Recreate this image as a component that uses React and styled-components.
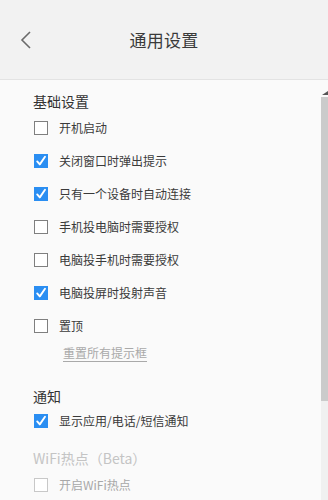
import React from "react";
import styled, { createGlobalStyle } from "styled-components";

const Global = createGlobalStyle`
  html, body { margin: 0; padding: 0; }
  body {
    background: #fafafa;
    font-family: "Noto Sans CJK SC", "Noto Sans", sans-serif;
    color: #333;
  }
`;

const Page = styled.div`
  width: 328px;
  height: 500px;
  display: flex;
  flex-direction: column;
  overflow: hidden;
  background: #fafafa;
`;

const Header = styled.header`
  height: 79px;
  flex: 0 0 auto;
  display: grid;
  grid-template-columns: 60px 1fr 60px;
  align-items: center;
  background: #f2f2f2;
  border-bottom: 1px solid #e3e3e3;
`;

const Back = styled.button`
  border: none;
  background: none;
  padding: 0 0 0 20px;
  display: flex;
  align-items: center;
  cursor: pointer;
`;

const Title = styled.h1`
  margin: 0;
  text-align: center;
  font-size: 17px;
  font-weight: 400;
  color: #3a3a3a;
  letter-spacing: 0.2px;
`;

const Body = styled.div`
  flex: 1;
  display: flex;
  min-height: 0;
`;

const Content = styled.div`
  flex: 1;
  padding: 11px 0 0 33px;
`;

const SectionTitle = styled.div`
  font-size: 14px;
  line-height: 20px;
  color: ${(p) => (p.$disabled ? "#c4c4c4" : "#333")};
  margin-top: ${(p) => p.$mt || 0}px;
  margin-bottom: ${(p) => p.$mb || 0}px;
`;

const Row = styled.label`
  display: flex;
  align-items: center;
  height: 33px;
  gap: 11px;
  padding-left: 1px;
  cursor: pointer;
`;

const Box = styled.span`
  width: 14px;
  height: 14px;
  box-sizing: border-box;
  flex: 0 0 auto;
  display: flex;
  align-items: center;
  justify-content: center;
  background: ${(p) => (p.$checked ? "#2a8ef2" : "#fff")};
  border: 1px solid ${(p) => (p.$checked ? "#2a8ef2" : p.$disabled ? "#c8c8c8" : "#7f7f7f")};
`;

const Label = styled.span`
  font-size: 12px;
  line-height: 16px;
  color: ${(p) => (p.$disabled ? "#a8a8a8" : "#3a3a3a")};
`;

const Link = styled.a`
  display: block;
  margin-left: 30px;
  font-size: 12px;
  line-height: 22px;
  color: #a9a9a9;
  text-decoration: underline;
  text-underline-offset: 3px;
`;

const ScrollBar = styled.div`
  width: 7px;
  flex: 0 0 auto;
  display: flex;
  flex-direction: column;
  background: #f0f0f0;
`;

const Arrow = styled.div`
  height: 17px;
  display: flex;
  align-items: flex-end;
  justify-content: center;
  padding-bottom: 2px;
  box-sizing: border-box;
  background: #fafafa;
`;

const Thumb = styled.div`
  height: 304px;
  background: #cbcbcb;
`;

function Check({ checked, disabled }) {
  return (
    <Box $checked={checked} $disabled={disabled}>
      {checked && (
        <svg width="12" height="12" viewBox="0 0 12 12">
          <path d="M2.2 6.4 L4.8 9.4 L10 1.8" fill="none" stroke="#fff" strokeWidth="1.9" strokeLinecap="round" strokeLinejoin="round" />
        </svg>
      )}
    </Box>
  );
}

function Item({ text, checked, disabled }) {
  return (
    <Row>
      <Check checked={checked} disabled={disabled} />
      <Label $disabled={disabled}>{text}</Label>
    </Row>
  );
}

export default function App() {
  const basic = [
    ["开机启动", false],
    ["关闭窗口时弹出提示", true],
    ["只有一个设备时自动连接", true],
    ["手机投电脑时需要授权", false],
    ["电脑投手机时需要授权", false],
    ["电脑投屏时投射声音", true],
    ["置顶", false],
  ];
  return (
    <Page>
      <Global />
      <Header>
        <Back aria-label="返回">
          <svg width="12" height="20" viewBox="0 0 12 20">
            <path d="M10 2 L2 10 L10 18" fill="none" stroke="#6a6a6a" strokeWidth="1.6" />
          </svg>
        </Back>
        <Title>通用设置</Title>
        <span />
      </Header>
      <Body>
        <Content>
          <SectionTitle>基础设置</SectionTitle>
          {basic.map(([t, c]) => (
            <Item key={t} text={t} checked={c} />
          ))}
          <Link>重置所有提示框</Link>
          <SectionTitle $mt={22} $mb={-2}>通知</SectionTitle>
          <Item text="显示应用/电话/短信通知" checked />
          <SectionTitle $mt={11} $disabled>WiFi热点（Beta）</SectionTitle>
          <Item text="开启WiFi热点" disabled />
        </Content>
        <ScrollBar>
          <Arrow>
            <svg width="6" height="4" viewBox="0 0 6 4">
              <path d="M0 4 L6 0 L6 4 Z" fill="#555" />
            </svg>
          </Arrow>
          <Thumb />
        </ScrollBar>
      </Body>
    </Page>
  );
}
